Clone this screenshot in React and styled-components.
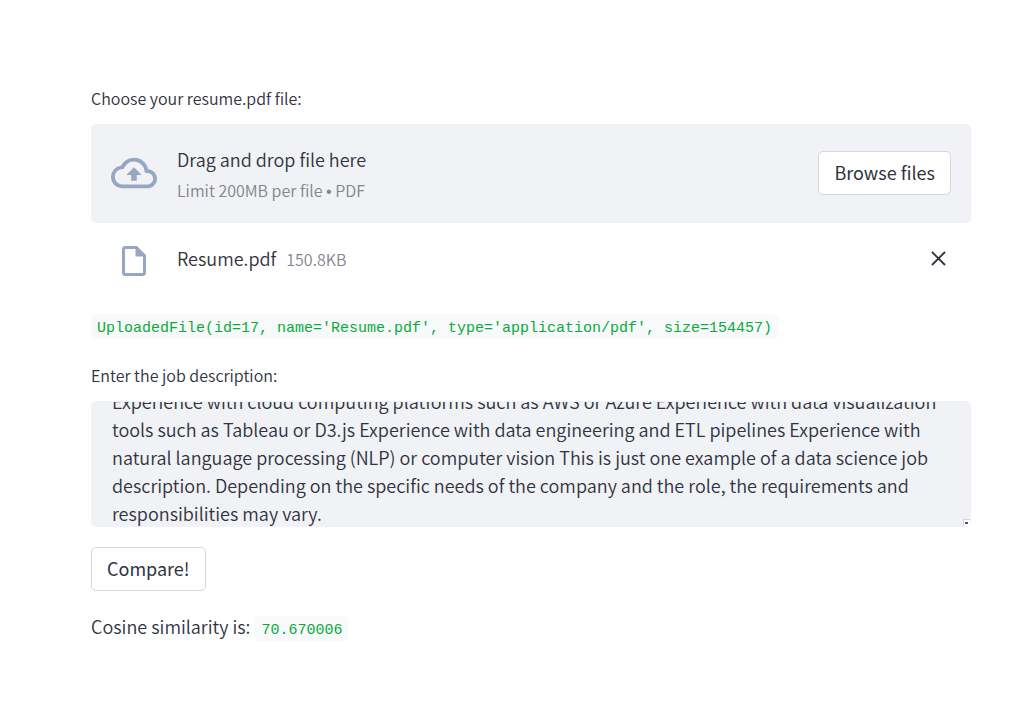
import React, { useLayoutEffect, useRef } from "react";
import styled, { createGlobalStyle } from "styled-components";

const sans = `"Noto Sans CJK SC", "Noto Sans", sans-serif`;
const mono = `"Liberation Mono", monospace`;
const ink = "#31333f";
const muted = "#83858c";
const panel = "#f0f2f6";

const GlobalStyle = createGlobalStyle`
  * { box-sizing: border-box; }
  body {
    margin: 0;
    background: #ffffff;
    color: ${ink};
    font-family: ${sans};
    font-size: 18px;
    font-weight: 350;
    line-height: 28px;
  }
`;

const Page = styled.main`
  display: flex;
  flex-direction: column;
  align-items: stretch;
  padding: 86px 42px 76px 91px;
`;

const Field = styled.section`
  display: flex;
  flex-direction: column;
`;

const Label = styled.label`
  font-size: 16px;
  line-height: 24px;
  margin-bottom: 14px;
`;

const DropZone = styled.div`
  display: flex;
  align-items: center;
  min-height: 99px;
  padding: 16px 20px 17px;
  border-radius: 5px;
  background: ${panel};
`;

const IconSlot = styled.span`
  display: flex;
  justify-content: center;
  flex: none;
  width: 46px;
  margin-right: 20px;
  color: #97a6c3;
`;

const Instructions = styled.div`
  display: flex;
  flex-direction: column;
  flex: 1;
  gap: 3px;
  padding-top: 4px;
`;

const Hint = styled.small`
  color: ${muted};
  font-size: 16px;
  line-height: 28px;
`;

const Bullet = styled.span`
  font-family: "Liberation Sans", sans-serif;
`;

const HiddenFile = styled.input`
  display: none;
`;

const Button = styled.button`
  height: 44px;
  padding: 0 15px 2px;
  border: 1px solid #d6d6d9;
  border-radius: 5px;
  background: #ffffff;
  color: ${ink};
  font: inherit;
  font-weight: 400;
  cursor: pointer;
`;

const FileRow = styled.div`
  display: flex;
  align-items: center;
  padding: 20px 20px 0;
`;

const FileInfo = styled.div`
  display: flex;
  align-items: baseline;
  flex: 1;
  gap: 10px;
  padding-bottom: 6px;
`;

const CloseButton = styled.button`
  display: flex;
  padding: 0 5px 6px;
  border: 0;
  background: transparent;
  color: ${ink};
  cursor: pointer;
`;

const Output = styled.p`
  display: flex;
  align-items: baseline;
  gap: 5px;
  margin: ${(p) => p.$margin};
`;

const Code = styled.code`
  padding: 4px 6px 0;
  border-radius: 5px;
  background: #f8f9fb;
  color: #09ab3b;
  font-family: ${mono};
  font-size: 15px;
  line-height: 21px;
`;

const TextArea = styled.textarea`
  display: block;
  width: 100%;
  height: 126px;
  padding: 20px;
  border: 1px solid ${panel};
  border-radius: 5px;
  outline: none;
  background: ${panel};
  color: ${ink};
  font: inherit;
  line-height: 28px;
  resize: vertical;

  &::-webkit-scrollbar {
    width: 6px;
    height: 6px;
    background: transparent;
  }
  &::-webkit-scrollbar-thumb {
    background: transparent;
  }
  &::-webkit-resizer {
    background:
      linear-gradient(#555555, #555555) 10px 11px / 3px 2px no-repeat,
      linear-gradient(#ffffff, #ffffff) 100% 100% / 6px 6px no-repeat,
      linear-gradient(#d4d4d6, #d4d4d6) 100% 100% / 7px 7px no-repeat;
  }
`;

const description =
  "Experience with cloud computing platforms such as AWS or Azure Experience with data visualization tools such as Tableau or D3.js Experience with data engineering and ETL pipelines Experience with natural language processing (NLP) or computer vision This is just one example of a data science job description. Depending on the specific needs of the company and the role, the requirements and responsibilities may vary.";

function CloudIcon() {
  return (
    <svg width="46" height="46" viewBox="0 0 24 24" fill="currentColor" aria-hidden="true">
      <path d="M19.35 10.04A7.49 7.49 0 0 0 12 4C9.11 4 6.6 5.64 5.35 8.04A5.994 5.994 0 0 0 0 14c0 3.31 2.69 6 6 6h13c2.76 0 5-2.24 5-5 0-2.64-2.05-4.78-4.65-4.96zM19 18H6c-2.21 0-4-1.79-4-4 0-2.05 1.53-3.76 3.56-3.97l1.07-.11.5-.95A5.469 5.469 0 0 1 12 6c2.62 0 4.88 1.86 5.39 4.43l.3 1.5 1.53.11A2.98 2.98 0 0 1 22 15c0 1.65-1.35 3-3 3zM8 13h2.55v3h2.9v-3H16l-4-4-4 4z" />
    </svg>
  );
}

function FileIcon() {
  return (
    <svg width="36" height="36" viewBox="0 0 24 24" fill="currentColor" aria-hidden="true">
      <path d="M14 2H6c-1.1 0-1.99.9-1.99 2L4 20c0 1.1.89 2 1.99 2H18c1.1 0 2-.9 2-2V8l-6-6zM6 20V4h7v5h5v11H6z" />
    </svg>
  );
}

function CloseIcon() {
  return (
    <svg width="15" height="15" viewBox="0 0 15 15" fill="none" stroke="currentColor" strokeWidth="1.8" aria-hidden="true">
      <path d="M1 1l13 13M14 1L1 14" />
    </svg>
  );
}

export default function App() {
  const area = useRef(null);
  const picker = useRef(null);

  // The box opens scrolled down to the last lines of the description.
  useLayoutEffect(() => {
    area.current.scrollTop = 35;
  }, []);

  return (
    <>
      <GlobalStyle />
      <Page>
        <Field>
          <Label htmlFor="resume">Choose your resume.pdf file:</Label>
          <DropZone>
            <IconSlot><CloudIcon /></IconSlot>
            <Instructions>
              <span>Drag and drop file here</span>
              <Hint>Limit 200MB per file <Bullet>•</Bullet> PDF</Hint>
            </Instructions>
            <HiddenFile ref={picker} id="resume" type="file" accept=".pdf" />
            <Button type="button" onClick={() => picker.current.click()}>Browse files</Button>
          </DropZone>
          <FileRow>
            <IconSlot><FileIcon /></IconSlot>
            <FileInfo>
              <span>Resume.pdf</span>
              <Hint>150.8KB</Hint>
            </FileInfo>
            <CloseButton type="button" aria-label="Remove file"><CloseIcon /></CloseButton>
          </FileRow>
        </Field>
        <Output $margin="35px 0 24px">
          <Code>UploadedFile(id=17, name='Resume.pdf', type='application/pdf', size=154457)</Code>
        </Output>
        <Field>
          <Label htmlFor="description">Enter the job description:</Label>
          <TextArea id="description" ref={area} defaultValue={description} spellCheck={false} />
        </Field>
        <Output as="div" $margin="20px 0 21px">
          <Button type="button">Compare!</Button>
        </Output>
        <Output $margin="0">
          Cosine similarity is: <Code>70.670006</Code>
        </Output>
      </Page>
    </>
  );
}
